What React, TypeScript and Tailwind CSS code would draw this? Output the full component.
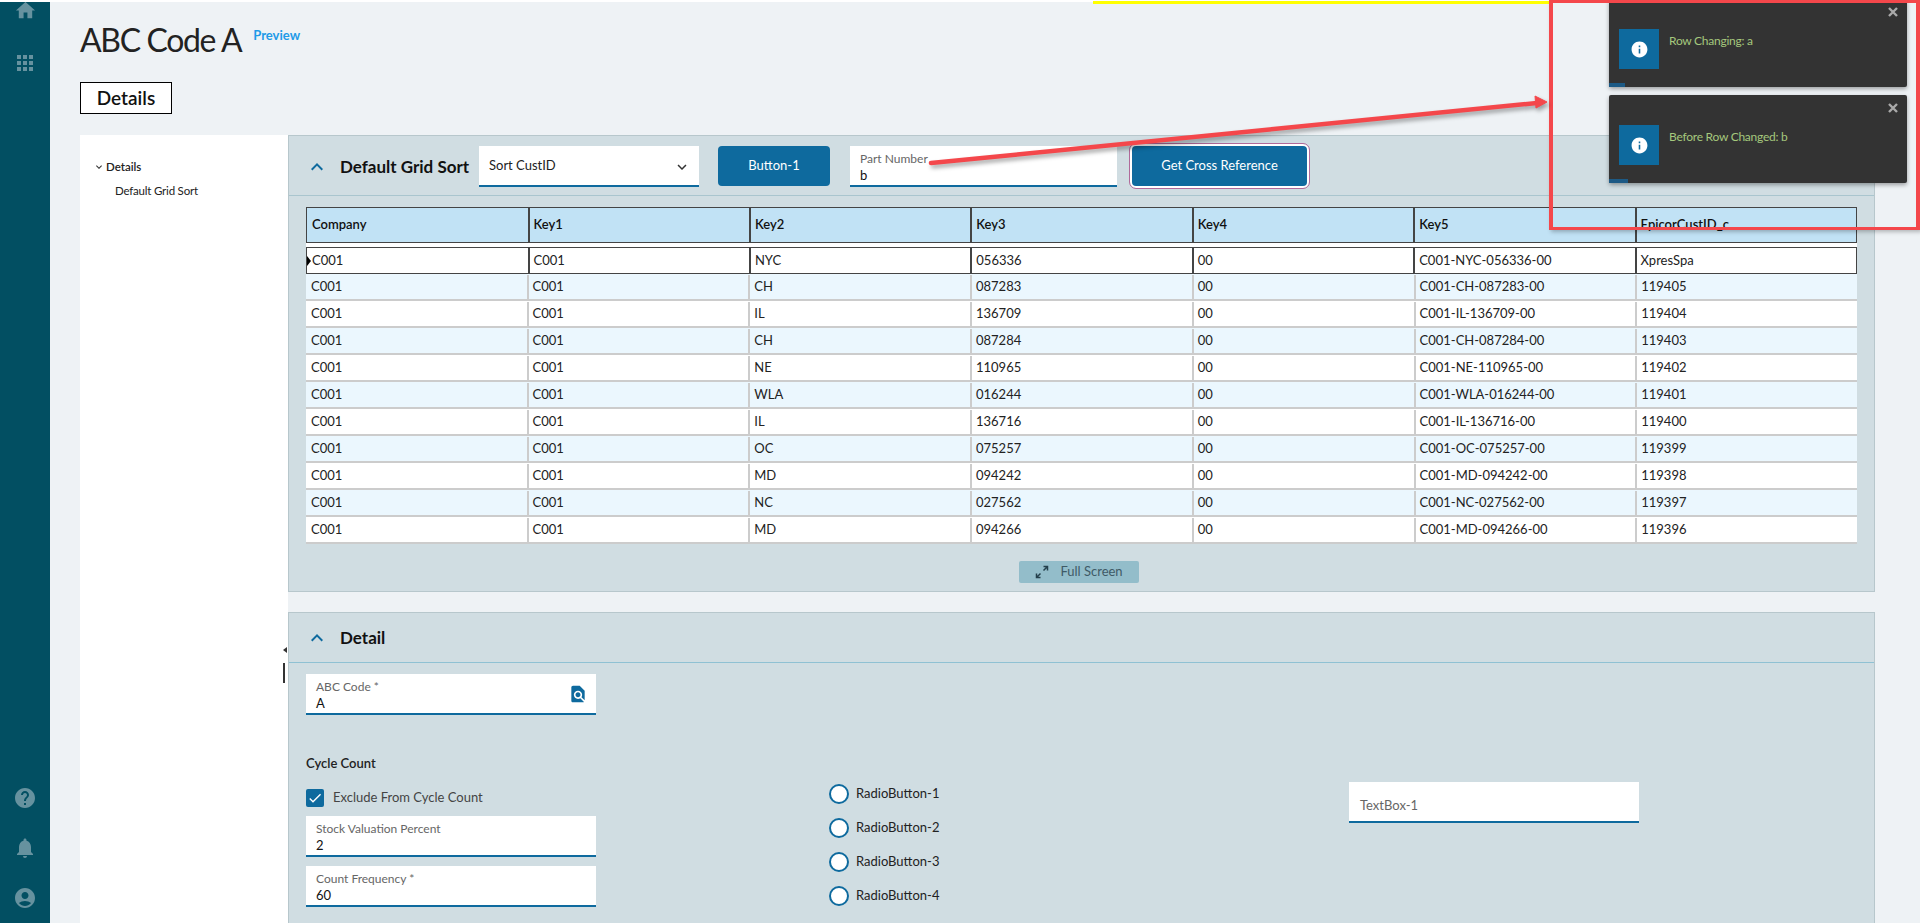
import React from 'react';
import { MdApps, MdExpandMore, MdAccountCircle, MdHelp, MdHome, MdInfo, MdKeyboardArrowDown, MdKeyboardArrowUp, MdNotifications, MdCheck, MdFindInPage } from 'react-icons/md';

const columns = ['Company', 'Key1', 'Key2', 'Key3', 'Key4', 'Key5', 'EpicorCustID_c'];

const rows = [
  ['NYC', '056336', 'XpresSpa'],
  ['CH', '087283', '119405'],
  ['IL', '136709', '119404'],
  ['CH', '087284', '119403'],
  ['NE', '110965', '119402'],
  ['WLA', '016244', '119401'],
  ['IL', '136716', '119400'],
  ['OC', '075257', '119399'],
  ['MD', '094242', '119398'],
  ['NC', '027562', '119397'],
  ['MD', '094266', '119396'],
];

const Field = ({ label, value, className = '' }: { label: string; value: string; className?: string }) => (
  <div className={`relative h-[41px] bg-white border-b-2 border-[#0e6a9e] pl-[10px] pt-[5px] ${className}`}>
    <div className="text-[12px] leading-[16px] text-[#666]">{label}</div>
    <div className="text-[13px] leading-[17px] text-[#111]">{value}</div>
  </div>
);

const PanelHeader = ({ title }: { title: string }) => (
  <>
    <MdKeyboardArrowUp className="w-[24px] h-[24px] text-[#0e6a9e] shrink-0 ml-[-4px]" />
    <span className="ml-[11px] text-[17px] font-bold text-[#111] whitespace-nowrap">{title}</span>
  </>
);

const Toast = ({ text, bar }: { text: string; bar: string }) => (
  <div className="relative h-[88px] bg-[#333] rounded-[2px] shadow-[0_2px_4px_rgba(0,0,0,0.35)] pl-[10px] pt-[30px] flex items-start">
    <div className="w-[40px] h-[40px] bg-[#0e6a9e] flex items-center justify-center">
      <MdInfo className="w-[19px] h-[19px] text-white" />
    </div>
    <div className="ml-[10px] mt-[3px] text-[12px] leading-[18px] tracking-[-0.25px] text-[#a5c87d]">{text}</div>
    <svg viewBox="0 0 10 10" className="absolute right-[9px] top-[8px] w-[10px] h-[10px]" stroke="#aaa" strokeWidth="2.4">
      <path d="M1 1L9 9M9 1L1 9" />
    </svg>
    <div className={`absolute left-0 bottom-0 h-[4px] bg-[#1d5a85] ${bar}`} />
  </div>
);

const Radio = ({ label }: { label: string }) => (
  <div className="flex items-center h-[34px]">
    <span className="w-[20px] h-[20px] rounded-full border-2 border-[#0e6a9e] bg-white" />
    <span className="ml-[7px] text-[13px] text-[#222]">{label}</span>
  </div>
);

export default function App() {
  return (
    <div className="relative w-[1920px] h-[923px] overflow-hidden bg-white pt-[2px] font-['Lato',sans-serif] text-[#222]">
      <div className="flex h-[921px] bg-[#eef2f5]">
        {/* side rail */}
        <div className="w-[50px] shrink-0 bg-[#024f62] flex flex-col justify-between items-center text-[#66929f] pb-[13px] overflow-hidden">
          <div className="flex flex-col items-center">
            <MdHome className="w-[23px] h-[23px] mt-[-3px]" />
            <MdApps className="w-[24px] h-[24px] mt-[29px]" />
          </div>
          <div className="flex flex-col items-center gap-[26px]">
            <MdHelp className="w-[24px] h-[24px]" />
            <MdNotifications className="w-[24px] h-[24px]" />
            <MdAccountCircle className="w-[24px] h-[24px]" />
          </div>
        </div>

        <div className="flex-1 flex flex-col pl-[30px] pr-[45px] min-w-0">
          <div className="flex items-start h-[80px] pt-[17px]">
            <h1 className="text-[32px] leading-[42px] text-[#222] tracking-[-1.35px]">ABC Code A</h1>
            <a className="ml-[12px] mt-[8px] text-[13px] leading-[16px] font-bold text-[#1e9be8]">Preview</a>
          </div>

          <div className="w-[92px] h-[32px] bg-white border border-black flex items-center justify-center text-[19px] font-semibold text-[#111]">
            Details
          </div>

          <div className="flex mt-[21px] flex-1 min-h-0">
            {/* nav tree */}
            <div className="relative w-[208px] shrink-0 bg-white pt-[24px]">
              <div className="flex items-center pl-[13px] h-[16px] text-[11.5px] font-semibold text-[#222]">
                <MdExpandMore className="w-[12px] h-[12px] text-[#333]" />
                <span className="ml-[1px]">Details</span>
              </div>
              <div className="pl-[35px] mt-[8px] text-[11.5px] leading-[16px] tracking-[-0.2px] text-[#222]">Default Grid Sort</div>
              <div className="absolute right-[1px] top-[512px] w-0 h-0 border-y-[3px] border-y-transparent border-r-[4px] border-r-[#333]" />
              <div className="absolute right-[3px] top-[528px] w-[2px] h-[20px] bg-[#333]" />
            </div>

            <div className="flex-1 min-w-0">
              {/* grid panel */}
              <div className="bg-[#d0dde2] border border-[#b7c7cc] pb-[8px]">
                <div className="flex items-start h-[60px] pl-[20px] pt-[10px] border-b border-[#a9c5ce]">
                  <div className="flex items-center h-[41px] w-[170px] shrink-0">
                    <PanelHeader title="Default Grid Sort" />
                  </div>
                  <div className="w-[220px] h-[41px] bg-white border-b-2 border-[#0e6a9e] flex items-center justify-between pl-[10px] pr-[8px] text-[13px] text-[#222]">
                    Sort CustID
                    <MdKeyboardArrowDown className="w-[18px] h-[18px] text-[#333] mt-[3px]" />
                  </div>
                  <button className="ml-[19px] w-[112px] h-[40px] rounded-[4px] bg-[#0e6a9e] text-white text-[13px]">Button-1</button>
                  <Field label="Part Number" value="b" className="ml-[20px] w-[267px]" />
                  <button className="ml-[15px] w-[175px] h-[40px] rounded-[4px] bg-[#0e6a9e] text-white text-[13px] ring-2 ring-white outline-1 outline-offset-2 outline-[#b06a9a]">
                    Get Cross Reference
                  </button>
                </div>

                <div className="mx-[17px] mt-[11px]">
                  <div className="grid grid-cols-[220.5px_repeat(6,1fr)] h-[36px] bg-[#c1e2f5] border border-[#444] text-[13px] font-semibold text-[#111]">
                    {columns.map((c, i) => (
                      <div key={c} className={`flex items-center ${i > 0 ? 'pl-[4px] border-l-2 border-[#444]' : 'pl-[5px]'}`}>{c}</div>
                    ))}
                  </div>
                  <div className="h-[4px] bg-white" />
                  {rows.map((r, i) => {
                    const cells = ['C001', 'C001', r[0], r[1], '00', `C001-${r[0]}-${r[1]}-00`, r[2]];
                    const selected = i === 0;
                    return (
                      <div
                        key={i}
                        className={`relative grid grid-cols-[220.5px_repeat(6,1fr)] text-[13px] text-[#222] ${
                          selected
                            ? 'h-[27px] border border-[#444] bg-white'
                            : `h-[27px] border-b-2 border-[#ccc] pt-[1px] ${i % 2 === 1 ? 'bg-[#ebf7fe]' : 'bg-white'}`
                        }`}
                      >
                        {selected && (
                          <span className="absolute left-0 top-[8px] w-0 h-0 border-y-[5px] border-y-transparent border-l-[4px] border-l-black" />
                        )}
                        {cells.map((c, j) => (
                          <div
                            key={j}
                            className={`flex items-center ${j > 0 ? `pl-[4px] border-l-2 ${selected ? 'border-[#444]' : 'border-[#ccc]'}` : 'pl-[5px]'}`}
                          >
                            {c}
                          </div>
                        ))}
                      </div>
                    );
                  })}
                </div>

                <div className="flex justify-center mt-[17px] mr-[5px]">
                  <div className="w-[120px] h-[22px] rounded-[2px] bg-[#93bdca] flex items-center justify-center gap-[11px] text-[13px] text-[#3f5a66]">
                    <svg viewBox="0 0 14 14" className="w-[14px] h-[14px]" fill="none" stroke="#24404c" strokeWidth="1.5">
                      <path d="M8.5 1.5H12.5V5.5M12.5 1.5L8.5 5.5M5.5 12.5H1.5V8.5M1.5 12.5L5.5 8.5" />
                    </svg>
                    Full Screen
                  </div>
                </div>
              </div>

              {/* detail panel */}
              <div className="mt-[20px] bg-[#d0dde2] border border-[#b7c7cc] h-[400px]">
                <div className="flex items-center h-[50px] pl-[20px] border-b border-[#8fc1d3]">
                  <PanelHeader title="Detail" />
                </div>
                <div className="pl-[17px] pt-[11px]">
                  <div className="relative w-[290px]">
                    <Field label="ABC Code *" value="A" />
                    <MdFindInPage className="absolute right-[8px] top-[10px] w-[20px] h-[20px] text-[#0e6a9e]" />
                  </div>
                  <div className="mt-[38px] h-[20px] text-[13px] leading-[20px] font-semibold text-[#222]">Cycle Count</div>
                  <div className="mt-[9px] grid grid-cols-[523px_520px_290px]">
                    <div className="w-[290px]">
                      <div className="flex items-center mt-[7px] h-[18px]">
                        <span className="w-[18px] h-[18px] rounded-[2px] bg-[#0e6a9e] flex items-center justify-center">
                          <MdCheck className="w-[16px] h-[16px] text-white" />
                        </span>
                        <span className="ml-[9px] text-[13px] text-[#444]">Exclude From Cycle Count</span>
                      </div>
                      <Field label="Stock Valuation Percent" value="2" className="mt-[9px]" />
                      <Field label="Count Frequency *" value="60" className="mt-[9px]" />
                    </div>
                    <div className="mt-[-5px]">
                      <Radio label="RadioButton-1" />
                      <Radio label="RadioButton-2" />
                      <Radio label="RadioButton-3" />
                      <Radio label="RadioButton-4" />
                    </div>
                    <div className="h-[41px] bg-white border-b-2 border-[#0e6a9e] pl-[11px] pt-[14px] text-[13px] leading-[18px] text-[#666]">TextBox-1</div>
                  </div>
                </div>
              </div>
            </div>
          </div>
        </div>
      </div>

      {/* toasts */}
      <div className="absolute left-[1609px] top-[-1px] w-[298px] flex flex-col gap-[8px]">
        <Toast text="Row Changing: a" bar="w-[16px]" />
        <Toast text="Before Row Changed: b" bar="w-[19px]" />
      </div>

      {/* screenshot annotations */}
      <div className="absolute left-[1093px] top-[1px] w-[456px] h-[3px] bg-[#ffff00]" />
      <div className="absolute left-[1549px] top-0 w-[371px] h-[230px] border-x-4 border-y-[3px] border-[#f4474b] shadow-[2px_2px_4px_rgba(0,0,0,0.25)]" />
      <svg className="absolute inset-0 w-[1920px] h-[923px] pointer-events-none drop-shadow-[2px_3px_2px_rgba(0,0,0,0.35)]" viewBox="0 0 1920 923">
        <path d="M931 163L1537 103" stroke="#f4474b" strokeWidth="4.5" strokeLinecap="round" />
        <path d="M1547 102L1535 96L1536 108Z" fill="#f4474b" stroke="#f4474b" strokeWidth="1" />
      </svg>
    </div>
  );
}
